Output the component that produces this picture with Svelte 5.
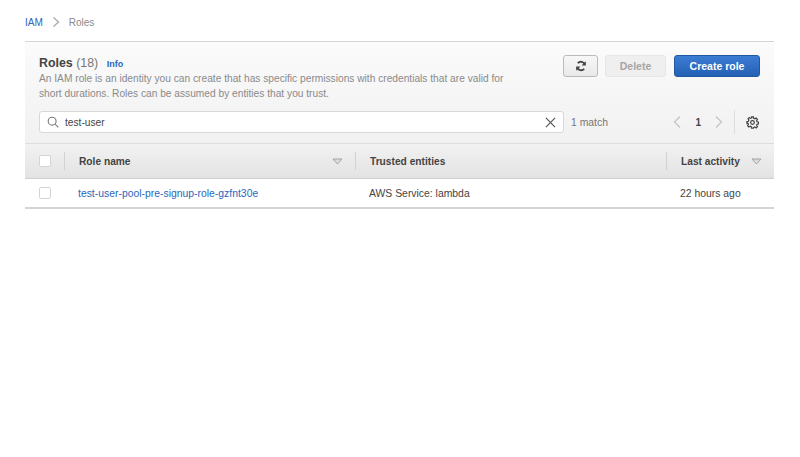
<script lang="ts">
  let query = $state("test-user");

  const roles = [
    { name: "test-user-pool-pre-signup-role-gzfnt30e", trusted: "AWS Service: lambda", activity: "22 hours ago" },
  ];
</script>

<div class="page">
  <nav class="crumbs">
    <a href="#iam">IAM</a>
    <svg class="crumb-sep" width="8" height="12" viewBox="0 0 8 12"><path d="M1.5 1.5 6.5 6l-5 4.5" /></svg>
    <span>Roles</span>
  </nav>

  <section class="panel">
    <div class="head">
      <div class="intro">
        <h1>Roles <span class="count">(18)</span> <a class="info" href="#info">Info</a></h1>
        <p>An IAM role is an identity you can create that has specific permissions with credentials that are valid for short durations. Roles can be assumed by entities that you trust.</p>
      </div>
      <div class="actions">
        <button class="btn refresh" aria-label="Refresh">
          <svg width="12" height="12" viewBox="0 0 14 14">
            <path d="M11.6 5.4A4.8 4.8 0 0 0 3.3 3.8" />
            <path d="M2.4 8.6a4.8 4.8 0 0 0 8.3 1.6" />
            <path class="solid" d="M12.6 1.5v5H7.6zM1.4 12.5v-5h5z" />
          </svg>
        </button>
        <button class="btn delete" disabled>Delete</button>
        <button class="btn create">Create role</button>
      </div>
    </div>

    <div class="tools">
      <div class="search">
        <svg width="12" height="12" viewBox="0 0 14 14"><circle cx="6" cy="6" r="4.6" /><path d="m9.4 9.4 3.8 3.8" /></svg>
        <input bind:value={query} aria-label="Search" />
        <svg class="clear" width="11" height="11" viewBox="0 0 12 12"><path d="m1 1 10 10M11 1 1 11" /></svg>
      </div>
      <span class="matches">1 match</span>
      <div class="pager">
        <svg width="8" height="14" viewBox="0 0 8 14"><path d="M7 1.5 1.5 7 7 12.5" /></svg>
        <b>1</b>
        <svg width="8" height="14" viewBox="0 0 8 14"><path d="M1 1.5 6.5 7 1 12.5" /></svg>
      </div>
      <div class="settings">
        <svg width="13" height="13" viewBox="0 0 14 14">
          <circle cx="7" cy="7" r="2" />
          <path d="M6 1h2l.3 1.6 1.2.5 1.4-.9 1.4 1.4-.9 1.4.5 1.2 1.6.3v2l-1.6.3-.5 1.2.9 1.4-1.4 1.4-1.4-.9-1.2.5L8 13H6l-.3-1.6-1.2-.5-1.4.9-1.4-1.4.9-1.4-.5-1.2L1 8V6l1.6-.3.5-1.2-.9-1.4 1.4-1.4 1.4.9 1.2-.5z" />
        </svg>
      </div>
    </div>
  </section>

  {#snippet sortIcon()}
    <svg class="sort" width="11" height="7" viewBox="0 0 11 7"><path d="M1 1h9L5.5 6z" /></svg>
  {/snippet}

  <table>
    <thead>
      <tr>
        <th class="check"><span class="box"></span></th>
        <th class="name"><div class="cell">Role name {@render sortIcon()}</div></th>
        <th class="trusted"><div class="cell">Trusted entities</div></th>
        <th class="activity"><div class="cell">Last activity {@render sortIcon()}</div></th>
      </tr>
    </thead>
    <tbody>
      {#each roles as role (role.name)}
        <tr>
          <td class="check"><span class="box"></span></td>
          <td class="name"><a href="#role">{role.name}</a></td>
          <td class="trusted">{role.trusted}</td>
          <td class="activity">{role.activity}</td>
        </tr>
      {/each}
    </tbody>
  </table>
</div>

<style>
  :global(body) {
    background: #fff;
  }

  .page {
    padding: 0 26px 0 25px;
    height: 457px;
    box-sizing: border-box;
    font-family: "Liberation Sans", Arial, sans-serif;
    font-size: 10.4px;
    color: #444;
  }

  a {
    color: #2a66bd;
    text-decoration: none;
  }

  svg {
    fill: none;
    stroke: #555;
    stroke-width: 1.3;
    display: block;
    flex: none;
  }

  .crumbs {
    height: 42px;
    display: flex;
    align-items: center;
    gap: 8px;
    padding-top: 3px;
    box-sizing: border-box;
    border-bottom: 1px solid #d5d5d5;
    color: #8a8a8a;
    font-size: 10px;
  }

  .crumb-sep {
    stroke: #aaa;
    margin: 0 1px;
  }

  .panel {
    height: 102px;
    box-sizing: border-box;
    padding: 13px 14px 0 14px;
    background: linear-gradient(#fbfbfb, #f1f1f1);
    border-bottom: 1px solid #ddd;
  }

  .head {
    display: flex;
    justify-content: space-between;
  }

  .intro {
    width: 480px;
  }

  h1 {
    margin: 0;
    font-size: 12.4px;
    line-height: 16px;
    color: #444;
  }

  .count {
    font-weight: normal;
    color: #777;
  }

  .info {
    margin-left: 5px;
    font-size: 9px;
  }

  p {
    margin: 0;
    line-height: 14.5px;
    color: #8a8a8a;
    font-size: 10.2px;
  }

  .actions {
    display: flex;
    gap: 7px;
    margin-left: auto;
  }

  .btn {
    height: 22px;
    padding: 0;
    border-radius: 3px;
    border: 1px solid #c8c8c8;
    font: bold 10.5px "Liberation Sans", Arial, sans-serif;
    display: flex;
    align-items: center;
    justify-content: center;
  }

  .refresh {
    width: 35px;
    background: linear-gradient(#f7f7f7, #e9e9e9);
    border-color: #bbb;
  }

  .refresh svg {
    stroke: #444;
    stroke-width: 2.2;
  }

  .refresh .solid {
    fill: #444;
    stroke: none;
  }

  .delete {
    width: 61px;
    background: #efefef;
    border-color: #e6e6e6;
    color: #a5a5a5;
  }

  .create {
    width: 86px;
    margin-left: 1px;
    background: linear-gradient(#3d7cd3, #2261b4);
    border-color: #22589f;
    color: #fff;
  }

  .tools {
    display: flex;
    align-items: center;
    margin-top: 8px;
    height: 26px;
  }

  .search {
    width: 525px;
    height: 22px;
    box-sizing: border-box;
    display: flex;
    align-items: center;
    gap: 6px;
    padding: 0 7px 0 7px;
    background: #fff;
    border: 1px solid #d8d8d8;
    border-radius: 3px;
  }

  .search svg {
    stroke: #777;
  }

  .search .clear {
    stroke: #555;
  }

  input {
    flex: 1;
    min-width: 0;
    border: 0;
    padding: 0;
    outline: 0;
    background: none;
    font: 10.2px "Liberation Sans", Arial, sans-serif;
    color: #444;
  }

  .matches {
    margin-left: 7px;
    color: #777;
  }

  .pager {
    margin-left: auto;
    display: flex;
    align-items: center;
    gap: 14px;
    padding-right: 11px;
    font-size: 10px;
    color: #444;
  }

  .pager svg {
    stroke: #c4c4c4;
  }

  .settings {
    height: 24px;
    display: flex;
    align-items: center;
    border-left: 1px solid #ddd;
    padding-left: 11px;
    padding-right: 1px;
  }

  .settings svg {
    stroke: #444;
  }

  table {
    width: 100%;
    table-layout: fixed;
    border-collapse: collapse;
    border-bottom: 2px solid #d5d5d5;
  }

  th {
    height: 34px;
    padding: 0;
    text-align: left;
    font-weight: bold;
    font-size: 10.2px;
    background: linear-gradient(#f2f2f2, #e3e3e3);
    border-bottom: 1px solid #d0d0d0;
    color: #444;
  }

  td {
    height: 29px;
    padding: 2px 0 0;
    box-sizing: border-box;
    color: #444;
  }

  .check {
    width: 39px;
    padding-left: 14px;
    box-sizing: border-box;
  }

  td.check {
    padding-top: 0;
  }

  .box {
    display: block;
    width: 10px;
    height: 10px;
    background: #fff;
    border: 1px solid #d4d4d4;
    border-radius: 2px;
  }

  .cell {
    height: 18px;
    display: flex;
    align-items: center;
    justify-content: space-between;
    padding: 0 12px 0 14px;
    border-left: 1px solid #d2d2d2;
  }

  .name {
    width: 291px;
  }

  td.name {
    padding-left: 14px;
  }

  .trusted {
    width: 311px;
  }

  td.trusted {
    padding-left: 14px;
  }

  td.activity {
    padding-left: 14px;
  }

  .sort {
    stroke: #a2a2a2;
    stroke-width: 1;
    fill: #dcdcdc;
  }
</style>
